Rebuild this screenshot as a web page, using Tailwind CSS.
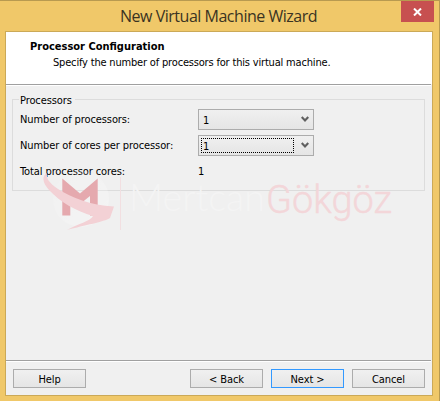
<!DOCTYPE html>
<html lang="en">
<head>
<meta charset="utf-8">
<title>New Virtual Machine Wizard</title>
<script src="https://cdn.jsdelivr.net/npm/@tailwindcss/browser@4"></script>
</head>
<body class="overflow-hidden">
<div class="relative flex h-[401px] w-[440px] flex-col border-t border-r border-[#b89a50] bg-[#f0c869] pr-[6px] pb-[5px] pl-[5px] font-['DejaVu_Sans_Condensed','DejaVu_Sans',sans-serif] text-[11px] leading-[14px] tracking-[-0.1px] text-black">
  <header class="flex h-[30px] shrink-0 items-start">
    <h1 class="flex-1 pt-[4px] pl-[115px] font-['Open_Sans',sans-serif] text-[16px] leading-[22px] tracking-[-0.48px] whitespace-nowrap text-[#3a3322]"><span>New Virtual Machine Wizard</span></h1>
    <button class="mr-[-1px] flex h-[21px] w-[33px] items-center justify-center bg-[#c75050]" aria-label="Close">
      <svg class="h-[8px] w-[9px]" viewBox="0 0 9 8"><path d="M1 .5 8 7.5M8 .5 1 7.5" stroke="#fff" stroke-width="2"/></svg>
    </button>
  </header>
  <main class="flex min-h-0 flex-1 flex-col border border-[#cba957] bg-[#f0f0f0]">
    <section class="h-[52px] shrink-0 bg-white pt-[8px] pl-[24px]">
      <h2 class="font-bold tracking-normal whitespace-nowrap"><span>Processor Configuration</span></h2>
      <p class="pt-[2px] pl-[23px] tracking-[-0.18px] whitespace-nowrap"><span>Specify the number of processors for this virtual machine.</span></p>
    </section>
    <div class="mr-px h-[2px] shrink-0 border-t border-b border-t-[#a0a0a0] border-b-white"></div>
    <section class="relative mt-[13px] mr-[7px] ml-[6px] h-[92px] shrink-0 border border-[#dcdcdc]">
      <div class="mt-[-7px] ml-[6px] h-[14px] w-[56px] bg-[#f0f0f0] pt-px pl-px leading-[14px]"><span>Processors</span></div>
      <div class="grid grid-cols-[178px_116px] grid-rows-[21px_21px_21px] gap-y-[5px] pt-[2px] pl-[7px]">
        <label class="pt-[4px] whitespace-nowrap"><span>Number of processors:</span></label>
        <div class="flex items-center justify-between border border-[#acacac] bg-linear-to-b from-[#f0f0f0] to-[#e5e5e5] pr-[4px] pl-[4px]"><span class="pt-[2px]">1</span>
          <svg class="h-[7px] w-[8px]" viewBox="0 0 8 7"><path d="M.7 1 4 4.5 7.3 1" fill="none" stroke="#606060" stroke-width="2.2"/></svg></div>
        <label class="pt-[4px] whitespace-nowrap"><span>Number of cores per processor:</span></label>
        <div class="flex items-center justify-between border border-[#acacac] bg-linear-to-b from-[#f0f0f0] to-[#e5e5e5] pr-[4px] pl-[2px]"><div class="flex h-[15px] w-[93px] items-center border border-dotted border-black pl-px"><span class="pt-[2px]">1</span></div>
          <svg class="h-[7px] w-[8px]" viewBox="0 0 8 7"><path d="M.7 1 4 4.5 7.3 1" fill="none" stroke="#606060" stroke-width="2.2"/></svg></div>
        <div class="pt-[4px] whitespace-nowrap"><span>Total processor cores:</span></div>
        <div class="pt-[4px]">1</div>
      </div>
    </section>
    <div class="flex-1"></div>
    <div class="mr-px h-[2px] shrink-0 border-t border-b border-t-[#a0a0a0] border-b-white"></div>
    <footer class="flex h-[33px] shrink-0 items-start pt-[7px] pl-[7px]">
      <button class="h-[19px] w-[73px] border border-[#acacac] bg-linear-to-b from-[#f0f0f0] to-[#e5e5e5] pt-[2px]">Help</button>
      <button class="ml-[104px] h-[19px] w-[73px] border border-[#acacac] bg-linear-to-b from-[#f0f0f0] to-[#e5e5e5] pt-[2px]">&lt; Back</button>
      <button class="ml-[8px] h-[19px] w-[73px] border border-[#3399ff] bg-linear-to-b from-[#f0f0f0] to-[#e5e5e5] pt-[2px]">Next &gt;</button>
      <button class="ml-[8px] h-[19px] w-[73px] border border-[#acacac] bg-linear-to-b from-[#f0f0f0] to-[#e5e5e5] pt-[2px]">Cancel</button>
    </footer>
  </main>
  <!-- Watermark -->
  <svg class="pointer-events-none absolute top-[-1px] left-0 h-[401px] w-[440px] tracking-normal" viewBox="0 0 440 401">
    <defs><linearGradient id="orb" x1="0" y1="0" x2="1" y2="1"><stop offset="0" stop-color="#fff" stop-opacity=".05"/><stop offset="1" stop-color="#fff" stop-opacity=".3"/></linearGradient></defs>
    <circle cx="81" cy="199" r="28" fill="url(#orb)"/>
    <path d="M62.3 178.5 80 193.5 97.7 178.5V215.5H90V196L80 204 70.3 196V215.5H62.3Z" fill="#e5a9ae"/>
    <path d="M47 173C46 178 49 183 58 189C72 198 90 205 114 206.500L110 218C104 222 85 225 67 230C77 224 91 221 93 216C76 211 60 202 49 190C42 182 42 176 47 173Z" fill="#f3d1d5"/>
    <path d="M120.500 177V230" stroke="#f2dfe1" stroke-width="1"/>
    <text x="129" y="211" font-family="Lato, sans-serif" font-size="38" font-weight="300" fill="#f4f4f4" textLength="136" lengthAdjust="spacingAndGlyphs">Mertcan</text>
    <text x="266" y="212.500" font-family="Roboto, sans-serif" font-size="39" font-weight="300" fill="#f3d6d9" stroke="#f3d6d9" stroke-width=".4" stroke-linejoin="round" textLength="126" lengthAdjust="spacingAndGlyphs">Gökgöz</text>
  </svg>
</div>
</body>
</html>
